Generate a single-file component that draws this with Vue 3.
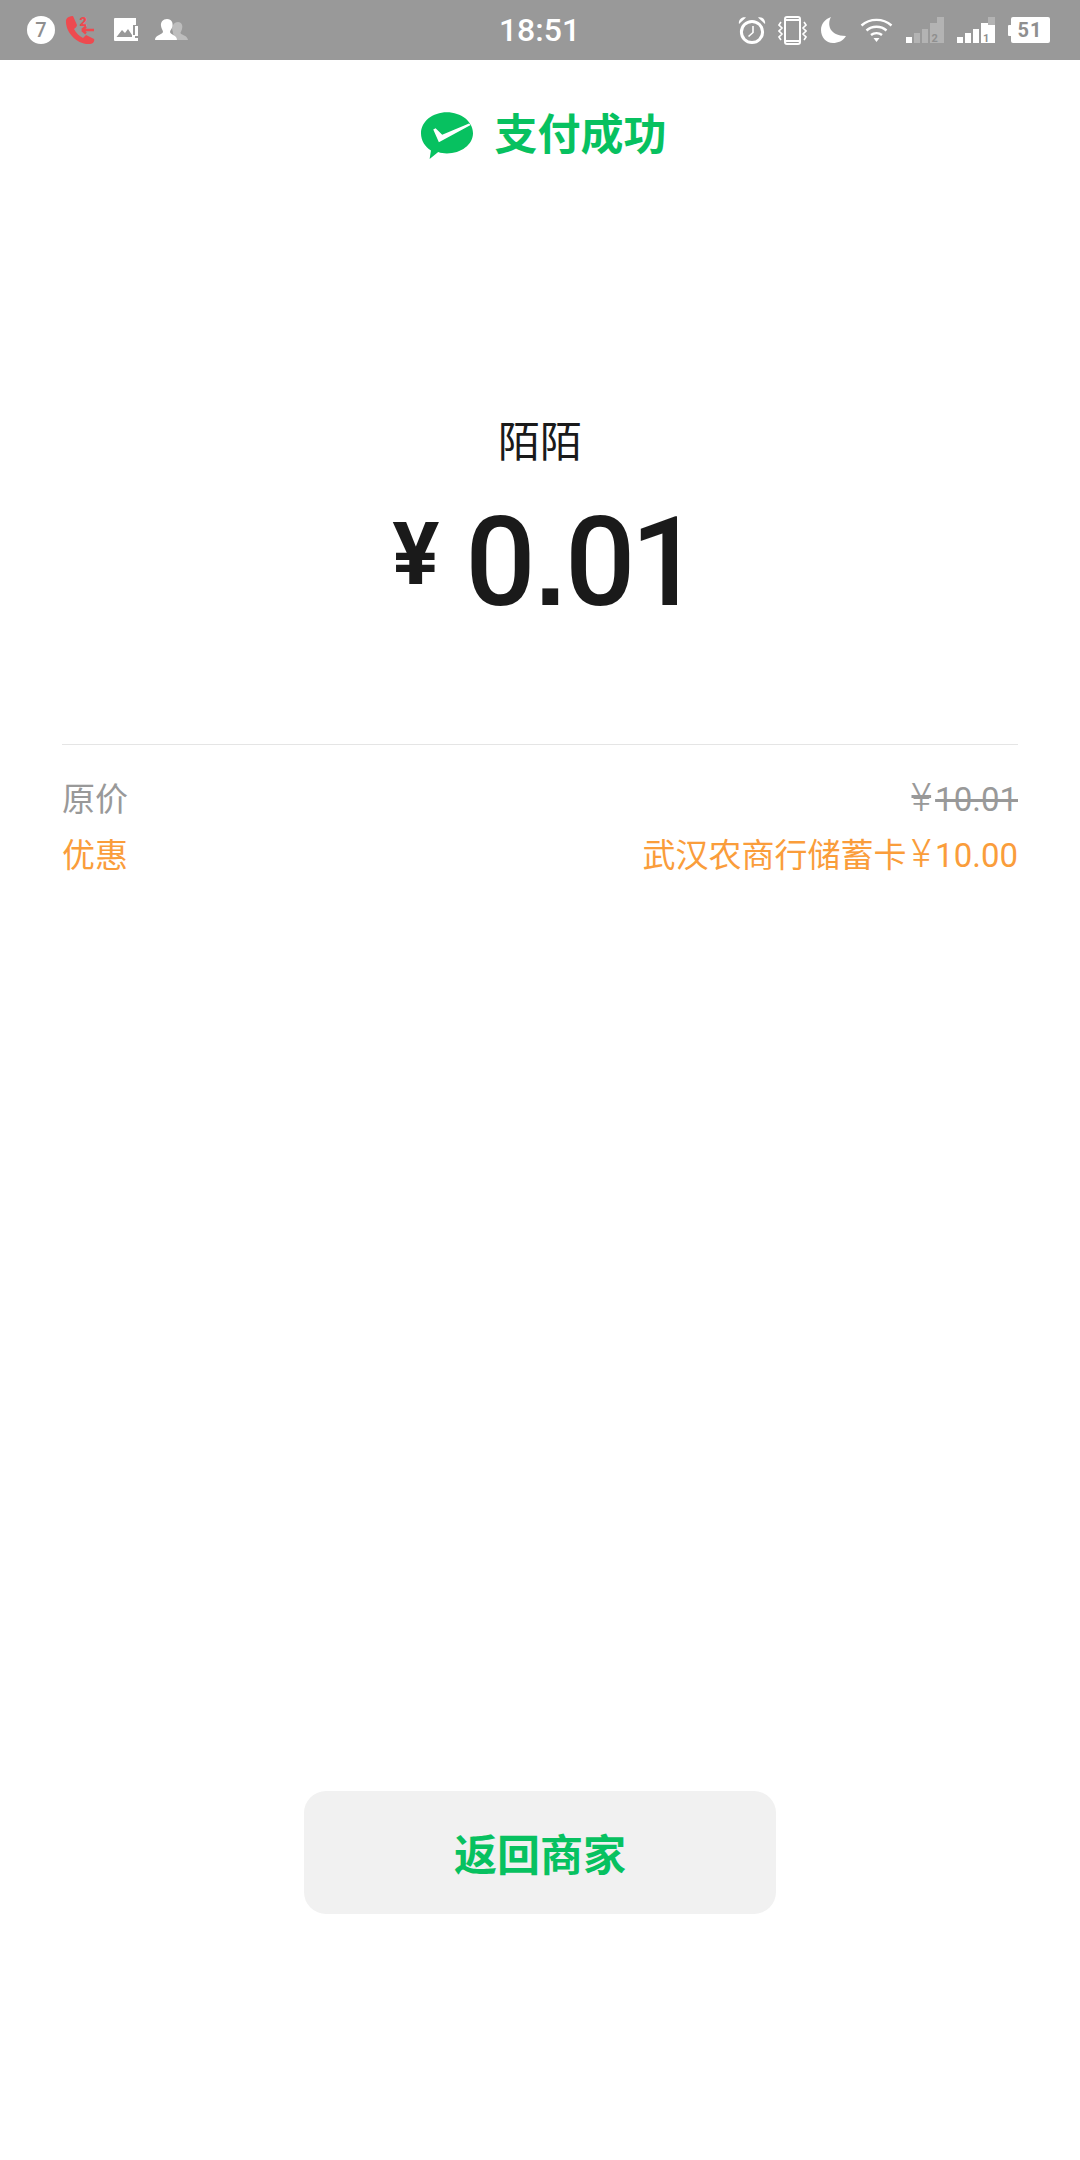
<template>
  <div class="page">
    <div class="status-bar">
      <div class="status-left">
        <svg class="ic" width="28" height="28" viewBox="0 0 28 28">
          <circle cx="14" cy="14" r="14" fill="#fff" />
          <text x="14" y="21" text-anchor="middle" font-size="20" font-weight="500" fill="#8f8f8f" font-family="Roboto, sans-serif">7</text>
        </svg>
        <svg class="ic phone" width="30" height="30" viewBox="0 0 30 30">
          <path d="M1 5 C2 2 5 1 8 1 L12 10 C12 12 10 13 9 14 C11 18 14 21 18 23 L21 20 L29 24 C30 26 28 29 25 29 C12 30 0 17 1 5 Z" fill="#ee4a4f" />
          <path d="M17 15 L29 15 M17 15 L21 11.5 M17 15 L21 18.5" stroke="#ee4a4f" stroke-width="2.4" fill="none" />
          <text x="14.5" y="10.5" font-size="12.5" font-weight="900" fill="#ee4a4f" font-family="Roboto, sans-serif">2</text>
        </svg>
        <svg class="ic image" width="26" height="26" viewBox="0 0 26 26">
          <path d="M2 1 H23 V8 H20 V18 H22 V24 H2 Q1 24 1 23 V2 Q1 1 2 1 Z" fill="#fff" />
          <path d="M3.5 20 L9 13 L12 16 L15 12 L19 18 V20 Z" fill="#999" />
          <rect x="22" y="9" width="3" height="10" fill="#fff" />
          <rect x="22" y="21" width="3" height="3" fill="#fff" />
        </svg>
        <svg class="ic users" width="33" height="24" viewBox="0 0 33 24">
          <path d="M23 4 C27 4 28 8 27 11 C26.5 13 25.5 14 25.5 15 C26 17 32 17 33 22 L22 22 C20 18 18 17 18 15 C18 13 16 10 18 7 C19 5 21 4 23 4 Z" fill="#bdbdbd" />
          <path d="M12 1 C17 1 18 5 17.5 8 C17 11 15 12.5 15 14 C15.5 17 22 17 22 22 L0 22 C0 17 7 17 8 14 C8 12.5 6.5 11 6 8 C5.5 4 8 1 12 1 Z" fill="#fff" />
        </svg>
      </div>
      <div class="clock">18:51</div>
      <div class="status-right">
        <svg class="ic" width="28" height="29" viewBox="0 0 28 29">
          <circle cx="14" cy="16" r="10.6" fill="none" stroke="#fff" stroke-width="3" />
          <path d="M15 10 V16.5 L10.5 20.5" fill="none" stroke="#fff" stroke-width="1.6" />
          <path d="M1 8 C0 4 4 0 8 1.5 Z M27 8 C28 4 24 0 20 1.5 Z" fill="#fff" />
        </svg>
        <svg class="ic vibrate" width="29" height="29" viewBox="0 0 29 29">
          <rect x="7" y="1" width="15" height="27" rx="2" fill="none" stroke="#fff" stroke-width="2" />
          <rect x="7" y="3" width="15" height="2" fill="#fff" />
          <rect x="7" y="24" width="15" height="2" fill="#fff" />
          <path d="M3 6 L1 9 L4 12 L1 15 L4 18 L1 21 L3 24 M26 6 L28 9 L25 12 L28 15 L25 18 L28 21 L26 24" fill="none" stroke="#fff" stroke-width="1.6" />
        </svg>
        <svg class="ic moon" width="27" height="28" viewBox="0 0 27 28">
          <path d="M11 1 C7 8 9 20 26 20 C23 25 18 27 13 27 C6 27 1 21 1 14 C1 8 5 3 11 1 Z" fill="#fff" />
        </svg>
        <svg class="ic wifi" width="33" height="26" viewBox="0 0 33 26">
          <path d="M1.5 8.5 C10 1 23 1 31.5 8.5 M6.5 13.5 C12 8.5 21 8.5 26.5 13.5 M11 18 C14 15.5 19 15.5 22 18" fill="none" stroke="#fff" stroke-width="2.4" />
          <path d="M13.5 21 L19.5 21 L16.5 25 Z" fill="#fff" />
        </svg>
        <svg class="ic signal" width="38" height="27" viewBox="0 0 38 27">
          <rect x="0" y="20" width="6" height="6" fill="#fff" />
          <rect x="8" y="16" width="6" height="10" fill="#b3b3b3" />
          <rect x="16" y="12" width="6" height="14" fill="#b3b3b3" />
          <rect x="24" y="6" width="14" height="20" fill="#b3b3b3" />
          <rect x="31" y="0" width="7" height="8" fill="#b3b3b3" />
          <text x="25.5" y="25" font-size="11" font-weight="700" fill="#8f8f8f" font-family="Roboto, sans-serif">2</text>
        </svg>
        <svg class="ic signal-1" width="38" height="27" viewBox="0 0 38 27">
          <rect x="0" y="20" width="6" height="6" fill="#fff" />
          <rect x="8" y="16" width="6" height="10" fill="#fff" />
          <rect x="16" y="12" width="6" height="14" fill="#fff" />
          <rect x="24" y="6" width="14" height="20" fill="#fff" />
          <rect x="31" y="0" width="7" height="8" fill="#b3b3b3" />
          <text x="26" y="25" font-size="11" font-weight="700" fill="#8f8f8f" font-family="Roboto, sans-serif">1</text>
        </svg>
        <svg class="ic battery" width="42" height="27" viewBox="0 0 42 27">
          <rect x="3" y="0" width="39" height="26" rx="2" fill="#fff" />
          <rect x="0" y="8" width="4" height="11" rx="1" fill="#fff" />
          <text x="22" y="20" text-anchor="middle" font-size="20" font-weight="700" fill="#8f8f8f" font-family="Roboto, sans-serif" letter-spacing="1">51</text>
        </svg>
      </div>
    </div>

    <div class="result">
      <svg class="logo" width="53" height="49" viewBox="60 60 160 146">
        <path d="M138 63 C181 63 217 91 217 126 C217 160 181 187 138 187 C128 187 120 186 112 183 L86 204 L90 178 C72 167 60 148 60 126 C60 91 95 63 138 63 Z" fill="#07c160" />
        <path d="M97 115 L104 111 L124 131 L205 97 L210 101 L114 153 Z" fill="#fff" />
      </svg>
      <span class="result-text">支付成功</span>
    </div>

    <div class="merchant">陌陌</div>
    <div class="amount">
      <span class="yen">¥</span>
      <span class="value">0<span class="dot">.</span>01</span>
    </div>

    <div class="detail">
      <div class="row muted">
        <span>原价</span>
        <span class="strike"><span class="small-yen">¥</span>10.01</span>
      </div>
      <div class="row orange">
        <span>优惠</span>
        <span>武汉农商行储蓄卡<span class="small-yen">¥</span>10.00</span>
      </div>
    </div>

    <button class="back-btn">返回商家</button>
  </div>
</template>

<script setup>
</script>

<style>
body {
  margin: 0;
  background: #fff;
}
</style>

<style scoped>
.page {
  width: 1080px;
  height: 2160px;
  display: flex;
  flex-direction: column;
  align-items: center;
  background: #fff;
  font-family: "Roboto", "Noto Sans CJK SC", sans-serif;
}

.status-bar {
  width: 100%;
  height: 60px;
  box-sizing: border-box;
  padding: 0 30px 0 27px;
  display: grid;
  grid-template-columns: 1fr auto 1fr;
  align-items: center;
  background: #999;
}

.status-left,
.status-right {
  display: flex;
  align-items: center;
}

.status-right {
  justify-content: flex-end;
}

.ic {
  display: block;
  flex: none;
}

.phone { margin-left: 10px; }
.image { margin-left: 18px; }
.users { margin-left: 16px; }
.vibrate { margin-left: 12px; }
.moon { margin-left: 13px; }
.wifi { margin-left: 13px; }
.signal { margin-left: 13px; }
.signal-1 { margin-left: 13px; }
.battery { margin-left: 13px; }

.clock {
  padding-left: 2px;
  color: #fff;
  font-size: 32px;
  font-weight: 500;
}

.result {
  margin-top: 50px;
  height: 50px;
  padding-left: 7px;
  display: flex;
  align-items: center;
  gap: 21px;
}

.result-text {
  color: #07c160;
  font-size: 43px;
  font-weight: 700;
  line-height: 50px;
}

.merchant {
  margin-top: 258px;
  color: #1a1a1a;
  font-size: 42px;
  line-height: 50px;
}

.amount {
  margin-top: 32px;
  height: 130px;
  padding-left: 8px;
  display: flex;
  align-items: center;
  gap: 26px;
  color: #1a1a1a;
}

.yen {
  margin-bottom: 23px;
  font-size: 88px;
  font-weight: 700;
  line-height: 100px;
}

.value {
  font-size: 124px;
  font-weight: 500;
  line-height: 130px;
  letter-spacing: -5px;
}

.dot {
  padding: 0 4px;
  font-family: "Liberation Sans", sans-serif;
  font-size: 112px;
  font-weight: 700;
}

.detail {
  margin-top: 114px;
  width: 956px;
  padding-top: 33px;
  border-top: 1px solid #e5e5e5;
  display: flex;
  flex-direction: column;
  gap: 12px;
}

.row {
  height: 44px;
  display: flex;
  justify-content: space-between;
  font-size: 33px;
  line-height: 44px;
}

.muted {
  color: #999;
}

.orange {
  color: #fa9d3b;
}

.strike {
  text-decoration: line-through;
}

.small-yen {
  padding: 0 4px 0 5px;
  font-size: 38px;
  font-weight: 300;
  line-height: 40px;
}

.back-btn {
  margin-top: 913px;
  width: 472px;
  height: 123px;
  padding: 0 0 2px;
  border: none;
  border-radius: 22px;
  background: #f1f1f1;
  color: #07c160;
  font-family: inherit;
  font-size: 43px;
  font-weight: 700;
}
</style>
